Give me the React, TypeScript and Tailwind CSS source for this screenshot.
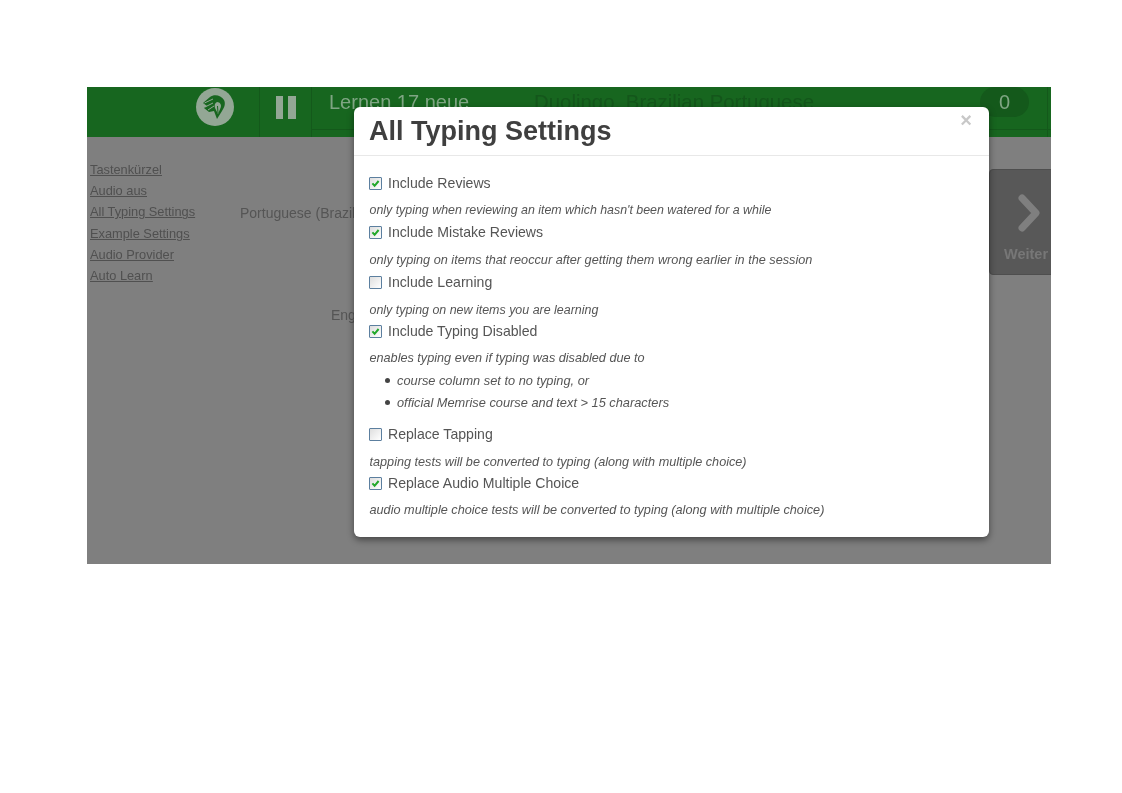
const sans = "font-['Liberation_Sans',Arial,sans-serif]";

function Check({ on }: { on: boolean }) {
  return (
    <span className="w-[13px] h-[13px] mr-[6px] shrink-0 border border-[#5c7f9f] bg-[linear-gradient(135deg,#dedede,#ffffff)] flex items-center justify-center rounded-[1px]">
      {on && (
        <svg viewBox="0 0 11 11" className="w-[11px] h-[11px]">
          <path d="M2.4 5.4 L4.6 7.8 L8.6 3" fill="none" stroke="#22a82a" strokeWidth="2" />
        </svg>
      )}
    </span>
  );
}

function Option({ label, on, className }: { label: string; on: boolean; className: string }) {
  return (
    <label className={`flex items-center h-5 text-[14.1px] text-[#555] ${className}`}>
      <Check on={on} />
      <span className="mt-[2px]">{label}</span>
    </label>
  );
}

function Note({ children, className }: { children: React.ReactNode; className: string }) {
  return <p className={`h-5 leading-5 pl-[0.5px] italic text-[#555] ${className}`}>{children}</p>;
}

function Bullet({ children }: { children: React.ReactNode }) {
  return (
    <li className="flex items-center h-[21.5px]">
      <span className="w-[5px] h-[5px] rounded-full bg-[#444] ml-[16px] mr-[7px]" />
      {children}
    </li>
  );
}

const links = ["Tastenkürzel", "Audio aus", "All Typing Settings", "Example Settings", "Audio Provider", "Auto Learn"];

export default function App() {
  return (
    <div className={`w-[1122px] h-[793px] bg-white pt-[87px] pl-[87px] ${sans}`}>
      <div className="relative w-[964px] h-[477px] overflow-hidden bg-[#7f7f7f] blur-[0.35px]">
        <header className="h-[50px] bg-[#17661f] flex relative">
          <div className="w-[172px] flex items-start justify-end pr-[25px]">
            <div className="w-[38px] h-[38px] mt-[1px] rounded-full bg-[#93a795] flex items-center justify-center">
              <svg viewBox="0 0 38 38" className="w-[38px] h-[38px]">
                <path d="M7 15 L14 9 C18 6 25 7 28 12 C30 16 28 20 26 23 L21 31 L18 23 L13 24 L8 20 L11 18 Z" fill="#17661f" />
                <path d="M8.5 15 L17 11 M9 19 L17 15 M12 22 L18 18" stroke="#93a795" strokeWidth="1" />
                <path d="M21 14 C24 14 26 17 24.5 20 L22 26 L19 20 C18 17 19 15 21 14 Z" fill="#93a795" />
                <path d="M21.5 18 L22 25" stroke="#17661f" strokeWidth="1" />
              </svg>
            </div>
          </div>
          <div className="w-[53px] border-l border-[#14591b] border-r flex items-start justify-center pt-[9px] gap-[5px]">
            <span className="w-[7.5px] h-[23px] bg-[#93a795]" />
            <span className="w-[7.5px] h-[23px] bg-[#93a795]" />
          </div>
          <div className="flex-1 border-b border-[#14591b] mb-[7px] pl-[17px] flex items-start text-[20px] text-[#7fa583] h-[43px]">
            <span className="w-[205px] leading-[31px]">Lernen 17 neue</span>
            <span className="leading-[31px] text-[20.4px] text-[#14561b]">Duolingo, Brazilian Portuguese</span>
          </div>
          <div className="absolute left-[893px] top-0 w-[49px] h-[30px] rounded-full bg-[#14591b] flex items-center justify-center text-[20px] text-[#7fa583]">0</div>
          <div className="absolute left-[960px] top-0 h-[50px] border-l border-[#14591b] w-[4px]" />
        </header>

        <nav className="absolute left-[3px] top-[72px] flex flex-col text-[12.8px] text-[#505050] underline leading-[21.2px]">
          {links.map((l) => (
            <a key={l}>{l}</a>
          ))}
        </nav>

        <span className="absolute left-[153px] top-[118px] whitespace-nowrap text-[14px] leading-[16px] text-[#555]">Portuguese (Brazil</span>
        <span className="absolute left-[244px] top-[220px] whitespace-nowrap text-[14px] leading-[16px] text-[#555]">Eng</span>

        <div className="absolute left-[902px] top-[82px] w-[70px] h-[106px] bg-[#585858] border border-[#4e4e4e] rounded-[4px] flex flex-col items-center">
          <svg viewBox="0 0 24 40" className="w-[24px] h-[40px] mt-[23px] ml-[10px]">
            <path d="M5 5 L19 20 L5 35" fill="none" stroke="#7f7f7f" strokeWidth="7" strokeLinecap="round" strokeLinejoin="round" />
          </svg>
          <span className="mt-[11px] text-[14.5px] font-bold text-[#777] self-start ml-[14px]">Weiter</span>
        </div>

        <div className="absolute left-[267px] top-[20px] w-[635px] h-[430px] bg-white rounded-[6px] shadow-[0_3px_7px_rgba(0,0,0,0.45)]">
          <div className="h-[49px] border-b border-[#e8e8e8] relative pl-[15px]">
            <h3 className="text-[27px] font-bold text-[#3f3f3f] leading-[48px]">All Typing Settings</h3>
            <span className="absolute right-[17px] top-[3px] text-[20px] font-bold text-[#c8c8c8] leading-[20px]">×</span>
          </div>
          <div className="pl-[15px] pt-[17px]">
            <Option on label="Include Reviews" className="" />
            <Note className="mt-[7px] text-[12.4px]">only typing when reviewing an item which hasn't been watered for a while</Note>
            <Option on label="Include Mistake Reviews" className="mt-[2px]" />
            <Note className="mt-[8px] text-[12.7px]">only typing on items that reoccur after getting them wrong earlier in the session</Note>
            <Option on={false} label="Include Learning" className="mt-[2px]" />
            <Note className="mt-[8px] text-[12.45px]">only typing on new items you are learning</Note>
            <Option on label="Include Typing Disabled" className="mt-[1px]" />
            <Note className="mt-[7px] text-[12.67px]">enables typing even if typing was disabled due to</Note>
            <ul className="text-[12.8px] italic text-[#555] mt-[2px]">
              <Bullet>course column set to no typing, or</Bullet>
              <Bullet>official Memrise course and text &gt; 15 characters</Bullet>
            </ul>
            <Option on={false} label="Replace Tapping" className="mt-[11px]" />
            <Note className="mt-[8px] text-[12.67px]">tapping tests will be converted to typing (along with multiple choice)</Note>
            <Option on label="Replace Audio Multiple Choice" className="mt-[1px]" />
            <Note className="mt-[7px] text-[12.7px]">audio multiple choice tests will be converted to typing (along with multiple choice)</Note>
          </div>
        </div>
      </div>
    </div>
  );
}
